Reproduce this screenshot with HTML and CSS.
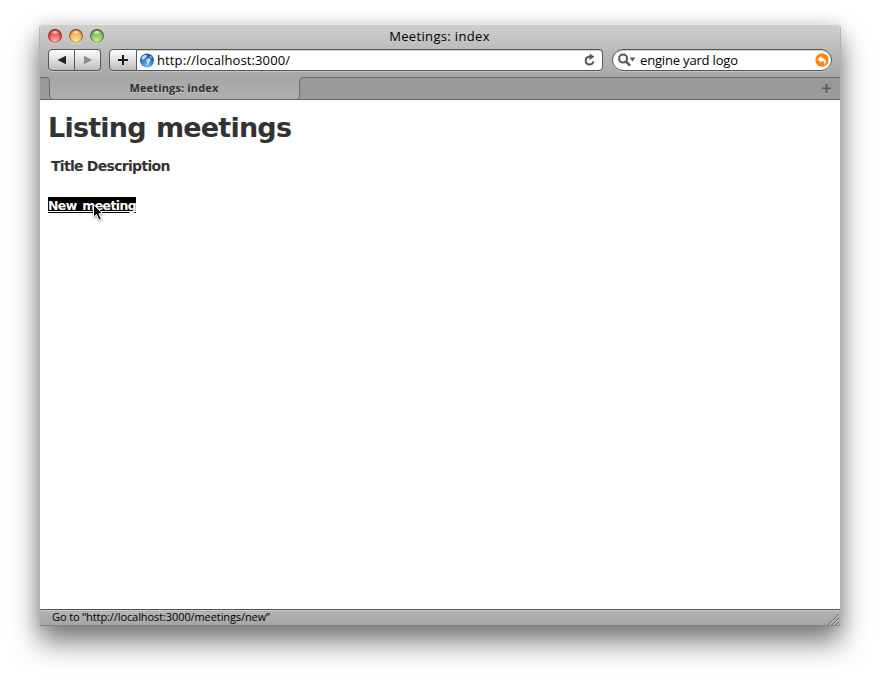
FILE: index.html
```html
<!DOCTYPE html>
<html lang="en">
<head>
<meta charset="utf-8">
<title>Meetings: index</title>
<link rel="stylesheet" href="styles.css">
</head>
<body>
<div class="window">
  <header class="chrome">
    <div class="titlebar">
      <div class="lights">
        <span class="light red"></span><span class="light amber"></span><span class="light green"></span>
      </div>
      <div class="title">Meetings: index</div>
    </div>
    <div class="toolbar">
      <div class="nav">
        <button class="btn back" aria-label="Back"><svg width="12" height="12" viewBox="0 0 12 12"><path d="M1.500 6 10 1.800V10.200Z" fill="#222"/></svg></button>
        <button class="btn forward" aria-label="Forward"><svg width="12" height="12" viewBox="0 0 12 12"><path d="M10 6 2 1.800V10.200Z" fill="#8c8c8c"/></svg></button>
      </div>
      <button class="btn add" aria-label="Add bookmark"><svg width="12" height="12" viewBox="0 0 12 12"><path d="M5 1h2v4h4v2H7v4H5V7H1V5h4Z" fill="#1c1c1c"/></svg></button>
      <div class="address">
        <svg class="globe" width="15" height="15" viewBox="0 0 15 15">
          <defs><radialGradient id="globe-fill" cx=".5" cy=".85" r=".85"><stop offset="0" stop-color="#7cc4f8"/><stop offset=".5" stop-color="#2f7ccf"/><stop offset="1" stop-color="#234f98"/></radialGradient></defs>
          <circle cx="7" cy="7.500" r="7" fill="url(#globe-fill)"/>
          <path d="M1.600 5 3 2.800 5.600 1.800 7.300 2.600 6 4.400 4.800 5.200 4.600 6.400 3.400 6.800 2 6.400ZM6.600 6.200 9.200 5 10.600 6.600 10 8.400 9 9.600 8.400 12 7.200 11.600 7.200 9.200 6.200 7.800ZM9.200 2.800 11 3.400 12 5 10.800 5Z" fill="#e2f1fc" opacity=".85"/>
        </svg>
        <span class="url">http://localhost:3000/</span>
        <svg class="reload" width="13" height="14" viewBox="0 0 13 14"><path d="M7.400 3.700H6.300A3.900 3.900 0 1 0 10.400 8.400" fill="none" stroke="#555" stroke-width="1.900"/><path d="M6.600 .6 11.400 3.800 6.600 7Z" fill="#555"/></svg>
      </div>
      <div class="search">
        <svg class="lens" width="19" height="14" viewBox="0 0 19 14"><circle cx="5.100" cy="5.600" r="4" fill="none" stroke="#555" stroke-width="2"/><path d="M7.900 8.400 12.100 12.600" stroke="#555" stroke-width="2.400"/><path d="M11.700 4.500H17.300L14.500 8.500Z" fill="#555"/></svg>
        <span class="query">engine yard logo</span>
        <svg class="snap" width="14" height="14" viewBox="0 0 14 14"><circle cx="7" cy="7" r="6.700" fill="#ff8412"/><path d="M2.600 6.300 6.400 2.800V4.900C9.400 4.900 11 6.400 11 8.600 11 10 10.200 11 9 11.600 9.600 9.200 8.800 7.800 6.400 7.700V9.800Z" fill="#fff"/></svg>
      </div>
    </div>
    <div class="tabs">
      <svg class="edge" width="15" height="23" viewBox="0 0 15 23"><path d="M0 .5H6Q9.500 .5 9.500 4.500V18Q9.500 22.500 14 22.500H15V23H0Z" fill="#999"/><path d="M0 .5H6Q9.500 .5 9.500 4.500V18Q9.500 22.500 14 22.500H15" fill="none" stroke="#6b6b6b"/><path d="M0 22.500H15" stroke="#6b6b6b"/></svg>
      <div class="tab">Meetings: index</div>
      <svg class="edge" width="15" height="23" viewBox="0 0 15 23"><path d="M15 .5H9Q5.500 .5 5.500 4.500V18Q5.500 22.500 1 22.500H0V23H15Z" fill="#999"/><path d="M15 .5H9Q5.500 .5 5.500 4.500V18Q5.500 22.500 1 22.500H0" fill="none" stroke="#6b6b6b"/><path d="M0 22.500H15" stroke="#6b6b6b"/></svg>
      <div class="tab-rest"><svg width="9" height="10" viewBox="0 0 9 10"><path d="M3.500 1h2v3.500H9v2H5.500V10h-2V6.500H0v-2h3.500Z" fill="#b8b8b8"/><path d="M3.500 0h2v3.500H9v2H5.500V9h-2V5.500H0v-2h3.500Z" fill="#5a5a5a"/></svg></div>
    </div>
  </header>
  <main class="page">
    <h1>Listing meetings</h1>
    <div class="columns"><span>Title</span><span>Description</span></div>
    <a class="new" href="#">New meeting<svg class="pointer" width="14" height="20" viewBox="0 0 14 20"><path d="M1.500 1.500V14.200L4.500 11.500 6.900 17 9.300 16 6.900 10.700H10.800Z" fill="#000" stroke="#fff"/></svg></a>
  </main>
  <footer class="status"><span>Go to “http://localhost:3000/meetings/new”</span>
    <svg class="grip" width="12" height="12" viewBox="0 0 12 12"><path d="M1.800 12 12 1.800M5.800 12 12 5.800M9.800 12 12 9.800" stroke="#d8d8d8" fill="none"/><path d="M.8 12 12 .8M4.800 12 12 4.800M8.800 12 12 8.800" stroke="#5a5a5a" fill="none"/></svg>
  </footer>
</div>
</body>
</html>
```
FILE: styles.css
```css
* { box-sizing: border-box; }

body {
  margin: 0;
  width: 880px;
  height: 680px;
  padding: 24px 39px 0;
  overflow: hidden;
  background: #fff;
  color: #000;
  font-family: "Open Sans", "Noto Sans", sans-serif;
}

svg { display: block; flex: none; }

.window {
  width: 802px;
  height: 602px;
  display: flex;
  flex-direction: column;
  border: solid rgba(0, 0, 0, .3);
  border-width: 0 1px;
  border-radius: 5px 5px 0 0;
  background-clip: padding-box;
  box-shadow: 0 16px 28px rgba(0, 0, 0, .52), 0 0 16px rgba(0, 0, 0, .12);
}

.chrome {
  flex: none;
  height: 76px;
  border-radius: 4px 4px 0 0;
  background: linear-gradient(#d0d0d0, #a6a6a6 53px, #b0b0b0);
  box-shadow: inset 0 1px #e4e4e4;
}

.titlebar { height: 25px; display: flex; padding-left: 8px; }
.lights { display: flex; gap: 7px; width: 60px; padding-top: 5px; }
.light {
  width: 14px;
  height: 14px;
  border-radius: 50%;
  box-shadow: inset 0 1px 2px rgba(60, 20, 0, .75), inset 0 0 1px 1px rgba(60, 40, 20, .35), 0 1px rgba(255, 255, 255, .35);
}
.red { background: radial-gradient(ellipse 5px 2.5px at 50% 22%, #ffe4e4, transparent), radial-gradient(circle at 50% 90%, #ffb9b9, #ee3d46 65%, #d02a34); }
.amber { background: radial-gradient(ellipse 5px 2.5px at 50% 22%, #fff3df, transparent), radial-gradient(circle at 50% 90%, #ffec9a, #f5a646 65%, #d98130); }
.green { background: radial-gradient(ellipse 5px 2.5px at 50% 22%, #effbe6, transparent), radial-gradient(circle at 50% 90%, #ccf09c, #76bb56 65%, #4f9440); }
.title {
  flex: 1;
  padding: 3px 69px 0 0;
  text-align: center;
  font-size: 13px;
  line-height: 18px;
  letter-spacing: .34px;
}

.toolbar { height: 28px; display: flex; padding: 0 8px; }
.nav { display: flex; width: 53px; margin-right: 8px; }
.btn {
  width: 27px;
  height: 22px;
  padding: 0;
  display: grid;
  place-items: center;
  border: 1px solid #565656;
  background: linear-gradient(#fdfdfd, #e2e2e2 45%, #bcbcbc);
  box-shadow: 0 1px rgba(255, 255, 255, .3);
}
.back { border-radius: 4px 0 0 4px; }
.forward { border-left: 0; border-radius: 0 4px 4px 0; width: 26px; }
.add { width: 28px; border-radius: 4px 0 0 4px; }
.address {
  width: 466px;
  height: 22px;
  display: flex;
  align-items: center;
  padding: 0 6px 0 3px;
  border: 1px solid #565656;
  border-left: 0;
  border-radius: 0 4px 4px 0;
  background: #fff;
  box-shadow: inset 0 1px #d0d0d0, 0 1px rgba(255, 255, 255, .3);
}
.url, .query { flex: 1; font-size: 13px; line-height: 18px; padding-bottom: 1px; }
.url { margin-left: 2px; letter-spacing: .12px; }
.query { margin-left: 3px; letter-spacing: -.17px; }
.search {
  flex: 1;
  height: 22px;
  margin-left: 9px;
  display: flex;
  align-items: center;
  padding: 0 2px 0 5px;
  border: 1px solid #565656;
  border-radius: 11px;
  background: #fff;
  box-shadow: inset 0 1px #d0d0d0, 0 1px rgba(255, 255, 255, .3);
}

.tabs { display: flex; height: 23px; }
.tab {
  width: 239px;
  padding: 3px 1px 0 0;
  border-bottom: 1px solid #6b6b6b;
  text-align: center;
  font-size: 11px;
  line-height: 15px;
  font-weight: 700;
  letter-spacing: .15px;
  color: #2e2e2e;
  text-shadow: 0 1px rgba(255, 255, 255, .3);
}
.tab-rest {
  flex: 1;
  display: flex;
  justify-content: flex-end;
  padding: 6px 9px 0 0;
  border: solid #6b6b6b;
  border-width: 1px 0;
  background: #999;
}

.page {
  flex: 1;
  display: flex;
  flex-direction: column;
  align-items: flex-start;
  padding: 12px 8px 0;
  background: #fff;
  color: #333;
  font-family: "DejaVu Sans", sans-serif;
  font-weight: 700;
}
h1 { margin: 0; font-size: 27px; line-height: 31px; letter-spacing: -.78px; word-spacing: 1.5px; }
.columns { display: flex; gap: 4px; margin: 15px 0 0 3px; font-size: 14px; line-height: 16px; letter-spacing: -.7px; }
.new {
  position: relative;
  margin-top: 23px;
  width: 88px;
  height: 16px;
  background: #000;
  color: #fff;
  font-size: 12.5px;
  line-height: 17px;
  letter-spacing: -.62px;
  word-spacing: 2px;
  white-space: nowrap;
  text-decoration: underline;
  text-decoration-thickness: 1px;
  text-decoration-skip-ink: none;
  text-underline-offset: 1px;
}
.pointer { position: absolute; left: 44px; top: 6px; filter: drop-shadow(0 1px 1px rgba(0, 0, 0, .4)); }

.status {
  flex: none;
  height: 17px;
  display: flex;
  justify-content: space-between;
  align-items: flex-end;
  padding: 0 1px 0 12px;
  border-top: 1px solid #555;
  border-bottom: 1px solid #858585;
  background: linear-gradient(#c8c8c8 1px, #b4b4b4 1px, #a5a5a5);
  font-size: 11px;
  line-height: 15px;
  letter-spacing: -.09px;
}
.status span { padding-bottom: 1px; line-height: 14px; }
```
